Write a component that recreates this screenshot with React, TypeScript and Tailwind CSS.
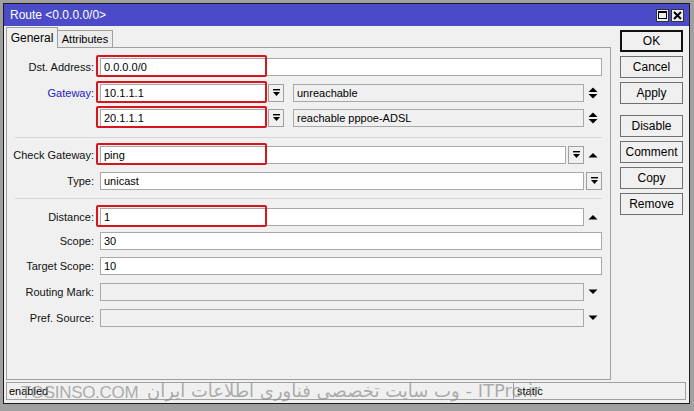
import React from "react";

const font = { fontFamily: '"Liberation Sans", Arial, sans-serif' };

function DropBtn() {
  return (
    <div className="w-[16px] h-[18px] shrink-0 border border-[#a0a0a0] bg-[#f0f0f0] flex items-center justify-center">
      <svg width="9" height="8" viewBox="0 0 9 8">
        <rect x="1" y="0" width="7" height="1.4" fill="#000" />
        <path d="M1 3h7l-3.5 4z" fill="#000" />
      </svg>
    </div>
  );
}

function UpDown() {
  return (
    <svg width="10" height="12" viewBox="0 0 10 12">
      <path d="M0.5 5L5 0.5 9.5 5z" fill="#000" />
      <path d="M0.5 7L5 11.5 9.5 7z" fill="#000" />
    </svg>
  );
}

function Up() {
  return (
    <svg width="10" height="6" viewBox="0 0 10 6">
      <path d="M0.5 5.5L5 1 9.5 5.5z" fill="#000" />
    </svg>
  );
}

function Down() {
  return (
    <svg width="10" height="6" viewBox="0 0 10 6">
      <path d="M0.5 0.5L5 5 9.5 0.5z" fill="#000" />
    </svg>
  );
}

function Field({ value, grey, className = "" }: { value?: string; grey?: boolean; className?: string }) {
  return (
    <div
      className={`h-[18px] border border-[#a8a8a8] flex items-center pl-[3px] text-[11px] text-black ${
        grey ? "bg-[#f0f0f0]" : "bg-white"
      } ${className}`}
    >
      {value}
    </div>
  );
}

function Mark() {
  return <div className="absolute -left-[4px] -top-[3px] w-[171px] h-[22px] border-2 border-[#d8141c] rounded-[2px]" />;
}

function Row({ label, blue, mt, children }: { label?: string; blue?: boolean; mt: string; children: React.ReactNode }) {
  return (
    <div className={`flex items-center ${mt}`}>
      <div className={`w-[87px] shrink-0 text-right text-[11px] ${blue ? "text-[#2222c4]" : "text-[#111]"}`}>
        {label ? `${label}:` : ""}
      </div>
      <div className="ml-[6px] flex-1 flex items-center relative">{children}</div>
    </div>
  );
}

function Arrow({ children }: { children?: React.ReactNode }) {
  return <div className="w-[18px] shrink-0 flex justify-center">{children}</div>;
}

const buttons = ["OK", "Cancel", "Apply", "Disable", "Comment", "Copy", "Remove"];

export default function App() {
  return (
    <div className="w-[694px] h-[411px] bg-[#a0a0a0] pt-[3px] pl-[3px] overflow-hidden" style={font}>
      <div className="w-[687px] h-[401px] border border-[#1c1c1c] bg-[#f0f0f0] flex flex-col">
        {/* title bar */}
        <div className="h-[23px] bg-[#4b4bc8] flex items-center justify-between pl-[6px] pr-[5px]">
          <span className="text-white text-[12px]">Route &lt;0.0.0.0/0&gt;</span>
          <div className="flex gap-[2px]">
            <div className="w-[13px] h-[13px] bg-[#f0f0f0] border border-[#333] flex items-center justify-center">
              <div className="w-[9px] h-[8px] border border-black border-t-2" />
            </div>
            <div className="w-[13px] h-[13px] bg-[#f0f0f0] border border-[#333] flex items-center justify-center">
              <svg width="9" height="9" viewBox="0 0 9 9">
                <path d="M1 1l7 7M8 1l-7 7" stroke="#000" strokeWidth="2" />
              </svg>
            </div>
          </div>
        </div>

        <div className="flex-1 flex flex-col pl-[2px] pr-[2px]">
          <div className="flex flex-1">
            {/* left */}
            <div className="w-[605px] flex flex-col pt-[1px]">
              <div className="flex items-end h-[20px]">
                <div className="h-[21px] w-[52px] border border-b-0 border-[#a0a0a0] bg-[#f0f0f0] text-[12px] flex items-center justify-center relative top-[1px] z-10">
                  General
                </div>
                <div className="h-[17px] w-[55px] border border-b-0 border-l-0 border-[#a0a0a0] bg-[#ececec] text-[11px] flex items-center justify-center">
                  Attributes
                </div>
              </div>
              <div className="h-[333px] border border-[#a0a0a0] pr-[8px] pt-[10px]">
                <Row label="Dst. Address" mt="">
                  <Field value="0.0.0.0/0" className="flex-1" />
                  <Mark />
                </Row>
                <Row label="Gateway" blue mt="mt-[8px]">
                  <Field value="10.1.1.1" className="w-[166px]" />
                  <div className="ml-[2px]"><DropBtn /></div>
                  <Field value="unreachable" grey className="ml-[9px] flex-1" />
                  <Arrow><UpDown /></Arrow>
                  <Mark />
                </Row>
                <Row mt="mt-[7px]">
                  <Field value="20.1.1.1" className="w-[166px]" />
                  <div className="ml-[2px]"><DropBtn /></div>
                  <Field value="reachable pppoe-ADSL" grey className="ml-[9px] flex-1" />
                  <Arrow><UpDown /></Arrow>
                  <Mark />
                </Row>
                <div className="ml-[8px] mt-[10px] h-px bg-[#d6d6d6]" />
                <Row label="Check Gateway" mt="mt-[8px]">
                  <Field value="ping" className="flex-1" />
                  <div className="ml-[2px]"><DropBtn /></div>
                  <Arrow><Up /></Arrow>
                  <Mark />
                </Row>
                <Row label="Type" mt="mt-[8px]">
                  <Field value="unicast" className="flex-1" />
                  <div className="ml-[2px]"><DropBtn /></div>
                </Row>
                <div className="ml-[8px] mt-[8px] h-px bg-[#d6d6d6]" />
                <Row label="Distance" mt="mt-[9px]">
                  <Field value="1" className="flex-1" />
                  <Arrow><Up /></Arrow>
                  <Mark />
                </Row>
                <Row label="Scope" mt="mt-[6px]">
                  <Field value="30" className="flex-1" />
                </Row>
                <Row label="Target Scope" mt="mt-[7px]">
                  <Field value="10" className="flex-1" />
                </Row>
                <Row label="Routing Mark" mt="mt-[8px]">
                  <Field grey className="flex-1" />
                  <Arrow><Down /></Arrow>
                </Row>
                <Row label="Pref. Source" mt="mt-[8px]">
                  <Field grey className="flex-1" />
                  <Arrow><Down /></Arrow>
                </Row>
              </div>
            </div>

            {/* right buttons */}
            <div className="ml-[9px] pt-[4px] flex flex-col w-[63px]">
              {buttons.map((b, i) => (
                <div
                  key={b}
                  className={`h-[22px] flex items-center justify-center text-[12px] bg-[#f0f0f0] ${
                    i === 0 ? "border-2 border-[#111]" : "border border-[#6f6f6f]"
                  } ${i === 0 ? "" : i === 3 ? "mt-[11px]" : "mt-[4px]"}`}
                >
                  {b}
                </div>
              ))}
            </div>
          </div>

          {/* status bar */}
          <div className="relative mt-[2px] mb-[3px] h-[18px] flex text-[11px] mr-[1px]">
            <div className="w-[508px] border border-[#a0a0a0] flex items-center pl-[2px]">enabled</div>
            <div className="flex-1 border border-l-0 border-[#a0a0a0] flex items-center pl-[3px]">static</div>
            <div className="absolute left-[15px] top-[-2px] text-[17px] tracking-[-0.3px] text-[#8c8c8c]/70 pointer-events-none">
              TOSINSO.COM
            </div>
            <div
              dir="rtl"
              className="absolute left-[141px] top-[-5px] text-[18px] text-[#8c8c8c]/70 whitespace-nowrap pointer-events-none"
              style={{ fontFamily: '"DejaVu Sans", "Noto Sans", sans-serif' }}
            >
              ITPro.ir - وب سایت تخصصی فناوری اطلاعات ایران
            </div>
          </div>
        </div>
      </div>
    </div>
  );
}
